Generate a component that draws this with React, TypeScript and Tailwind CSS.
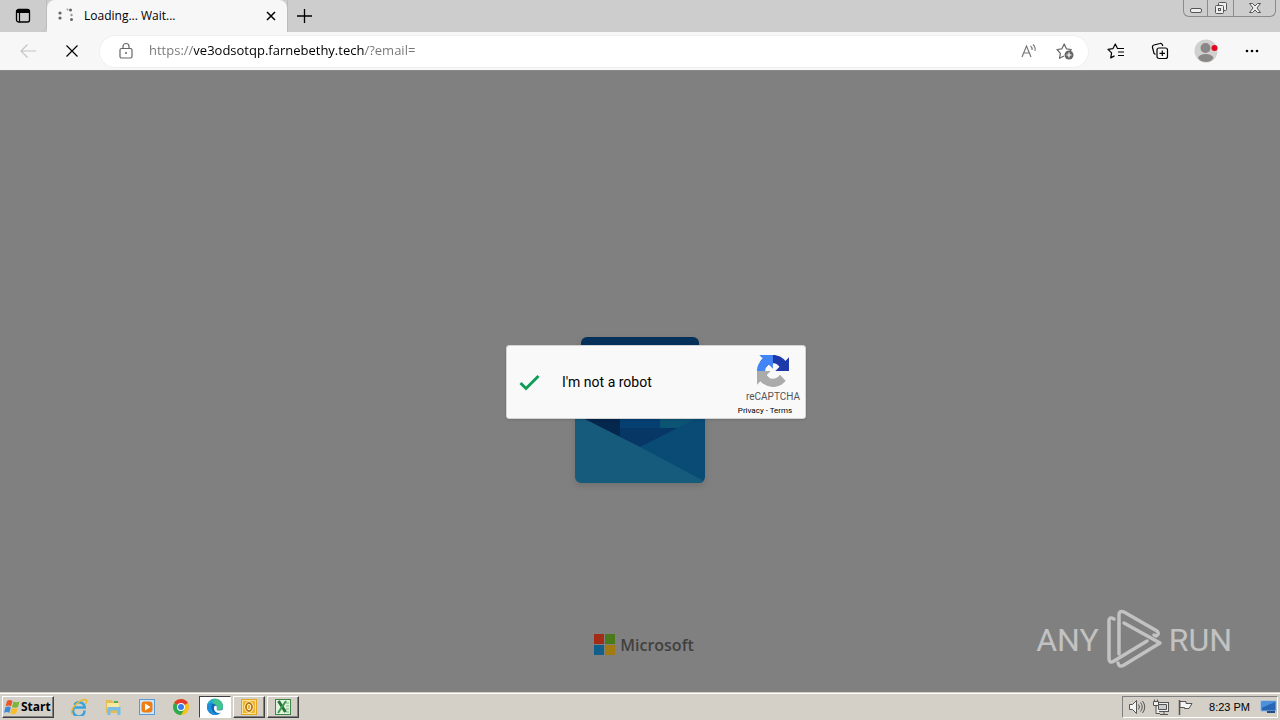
import { useState } from "react";
import type { ReactNode } from "react";

const iconProps = {
  fill: "none",
  stroke: "currentColor",
  "aria-hidden": true,
} as const;

const TabBar = () => (
  <header className="flex h-8 bg-[#cdcdcd]">
    <button
      aria-label="Tab actions"
      className="grid w-[47px] shrink-0 place-content-center rounded-br-md border-r border-[#bcbcbc] text-black"
    >
      <svg width="16" height="16" viewBox="0 0 16 16" {...iconProps}>
        <rect x="1.5" y="1.5" width="13" height="12.5" rx="2" strokeWidth="1.3" />
        <path d="M1.5 2.5h13v2h-13z" fill="currentColor" />
        <path d="M4.5 4v10" strokeWidth="1.2" />
      </svg>
    </button>
    <div className="flex w-[240px] items-center rounded-t-lg bg-[#f7f7f7] pr-2 pl-2.5">
      <svg width="18" height="18" viewBox="0 0 18 18" fill="#666" aria-hidden>
        <circle cx="3" cy="6" r="1.6" />
        <circle cx="3" cy="11" r="1.6" />
        <circle cx="10.5" cy="2.5" r="1" fill="#999" />
        <circle cx="13.5" cy="3" r="1.5" />
        <circle cx="14.5" cy="8" r="1.2" fill="#999" />
        <circle cx="14.5" cy="12.5" r="1.5" />
      </svg>
      <span className="ml-[9px] flex-1 truncate text-xs">Loading... Wait...</span>
      <button aria-label="Close tab" className="grid size-4 place-content-center">
        <svg width="10" height="10" viewBox="0 0 10 10" {...iconProps}>
          <path d="M1 1l8 8M9 1L1 9" strokeWidth="1.5" />
        </svg>
      </button>
    </div>
    <button aria-label="New tab" className="grid w-8 place-content-center border-l border-[#bcbcbc]">
      <svg width="16" height="16" viewBox="0 0 16 16" {...iconProps}>
        <path d="M8.5 1v14M1 8h15" strokeWidth="1.3" />
      </svg>
    </button>
    <div className="mr-1 ml-auto flex h-[17px] divide-x divide-[#8b8b8b] rounded-b-md border border-t-0 border-[#8b8b8b] text-[#555]">
      <button aria-label="Minimize" className="grid w-6 place-content-center">
        <svg width="14" height="14" viewBox="0 0 14 14" {...iconProps}>
          <rect x="1.5" y="7.5" width="11" height="4" rx="1.5" fill="#eee" />
        </svg>
      </button>
      <button aria-label="Restore" className="grid w-[26px] place-content-center">
        <svg width="14" height="14" viewBox="0 0 14 14" {...iconProps}>
          <rect x="4.5" y="1.5" width="8" height="8" rx="1" fill="#eee" />
          <rect x="1.5" y="4.5" width="8" height="8" rx="1" fill="#eee" />
          <rect x="4.5" y="7.5" width="2" height="2" />
        </svg>
      </button>
      <button aria-label="Close window" className="grid w-[41px] place-content-center">
        <svg width="14" height="14" viewBox="0 0 14 14" {...iconProps}>
          <path
            d="M1.5 2.5h3L7 5l2.5-2.5h3L9 7l3.5 4.500h-3L7 9l-2.500 2.500h-3L5 7z"
            fill="#eee"
          />
        </svg>
      </button>
    </div>
  </header>
);

const AddressBar = () => {
  const [url, setUrl] = useState("https://ve3odsotqp.farnebethy.tech/?email=");

  return (
    <nav className="flex h-[39px] items-center border-b border-[#8a8a8a] bg-[#f7f7f7] pr-4">
      <button aria-label="Back" disabled className="ml-3 grid size-8 place-content-center text-[#c4c4c4]">
        <svg width="18" height="16" viewBox="0 0 18 16" {...iconProps}>
          <path d="M17 8H2M8.5 1.5L2 8l6.500 6.500" strokeWidth="1.2" />
        </svg>
      </button>
      <button aria-label="Stop loading" className="ml-3 grid size-8 place-content-center">
        <svg width="14" height="14" viewBox="0 0 14 14" {...iconProps}>
          <path d="M1.5 1.5l11 11M12.5 1.5l-11 11" strokeWidth="1.2" />
        </svg>
      </button>
      <div className="ml-3 flex h-[31px] flex-1 items-center rounded-full bg-white pr-[11px] pl-[18px] ring-1 ring-[#f0f0f0]">
        <svg width="16" height="18" viewBox="0 0 16 18" className="text-[#666]" {...iconProps}>
          <rect x="2" y="6.5" width="12" height="9.5" rx="1.5" strokeWidth="1.2" />
          <path d="M5 6.500V4.500a3 3 0 016 0v2" strokeWidth="1.2" />
          <circle cx="8" cy="11" r="1" fill="currentColor" stroke="none" />
        </svg>
        {/* the host part of the address is darker than the rest */}
        <input
          type="text"
          aria-label="Address"
          value={url}
          onChange={(e) => setUrl(e.target.value)}
          className="ml-[15px] min-w-0 flex-1 bg-[linear-gradient(90deg,#757575_45px,#000_45px,#000_216px,#757575_216px)] bg-clip-text text-[13px] text-transparent caret-black outline-none"
        />
        <button aria-label="Read aloud" className="grid size-6 place-content-center text-[#777]">
          <svg width="18" height="18" viewBox="0 0 18 18" {...iconProps}>
            <path d="M2 15L6.500 4l4.500 11M3.500 11h6" strokeWidth="1.2" />
            <path d="M10.500 4a4 4 0 011.500 4M13 2.500a7 7 0 012 6.500" strokeWidth="1.1" />
          </svg>
        </button>
        <button aria-label="Add to favorites" className="ml-3 grid size-6 place-content-center text-[#666]">
          <svg width="18" height="18" viewBox="0 0 18 18" {...iconProps}>
            <path
              d="M8 14l-4.500 2.300.9-5L1 7.500l4.900-.7L8.200 2l2.200 4.800 4.900.7-1.500 1.500"
              strokeWidth="1.2"
              strokeLinejoin="round"
            />
            <circle cx="13" cy="13" r="4.5" fill="currentColor" stroke="none" />
            <path d="M13 10.500v5M10.500 13h5" stroke="#fff" strokeWidth="1.2" />
          </svg>
        </button>
      </div>
      <button aria-label="Favorites" className="ml-4 grid size-6 place-content-center">
        <svg width="18" height="18" viewBox="0 0 18 18" {...iconProps}>
          <path
            d="M10.500 6.500L8.300 2 5.900 6.700 1 7.400l3.600 3.500-.9 5 3.800-2M10 6.500h7M11 10h6M11 13.500h6"
            strokeWidth="1.2"
            strokeLinejoin="round"
          />
        </svg>
      </button>
      <button aria-label="Collections" className="ml-5 grid size-6 place-content-center">
        <svg width="18" height="18" viewBox="0 0 18 18" {...iconProps}>
          <rect x="6" y="6" width="10.5" height="10.5" rx="2" strokeWidth="1.2" />
          <path d="M11.300 8.500v5.500M8.500 11.300H14" strokeWidth="1.2" />
          <path
            d="M4.500 12.500L3 11.500 1.500 5.500A2 2 0 013 3l6-1.500a2 2 0 012.500 1.500l.3 1"
            strokeWidth="1.2"
          />
        </svg>
      </button>
      <button aria-label="Profile" className="ml-[22px] grid size-6 place-content-center">
        <svg width="24" height="24" viewBox="0 0 24 24" aria-hidden>
          <circle cx="12" cy="12" r="11.5" fill="#d2d0ce" />
          <circle cx="11.5" cy="9" r="5" fill="#8a8886" />
          <path d="M4 19c1-3 4-4 7.500-4s7 1 8 4c-2 3-5 4-7.500 4s-6-1-8-4z" fill="#8a8886" />
          <circle cx="20.500" cy="9" r="3" fill="#e00b1c" />
        </svg>
      </button>
      <button aria-label="Settings and more" className="ml-[22px] grid size-6 place-content-center">
        <svg width="14" height="4" viewBox="0 0 14 4" fill="#000" aria-hidden>
          <circle cx="2" cy="2" r="1.3" />
          <circle cx="7" cy="2" r="1.3" />
          <circle cx="12" cy="2" r="1.3" />
        </svg>
      </button>
    </nav>
  );
};

const Envelope = () => (
  <svg width="130" height="146" viewBox="0 0 130 146" className="drop-shadow-md" aria-hidden>
    <rect x="6" y="0" width="118" height="90" rx="6" fill="#05305a" />
    <path d="M8 60h38v60L8 90z" fill="#05264d" />
    <path d="M45 60h40v50H45z" fill="#064073" />
    <path d="M85 60h42v31H85z" fill="#0c5474" />
    <path d="M45 91h65v20H45z" fill="#063765" />
    <path d="M130 77L65 110v36h59a6 6 0 006-6z" fill="#0a4b76" />
    <path d="M0 77l65 33 63 33.500a6 6 0 01-4 2.500H6a6 6 0 01-6-6z" fill="#175b7c" />
  </svg>
);

const Recaptcha = () => {
  const [checked, setChecked] = useState(true);

  return (
    <section className="flex h-[74px] w-[300px] items-center rounded-[3px] border border-[#d3d3d3] bg-[#f9f9f9] pl-2.5 font-[Roboto,sans-serif] shadow-sm">
      <label className="flex flex-1 items-center text-sm text-black">
        <span className="grid">
          <input
            type="checkbox"
            checked={checked}
            onChange={(e) => setChecked(e.target.checked)}
            className="peer col-start-1 row-start-1 size-6 appearance-none"
          />
          <svg
            width="24"
            height="24"
            viewBox="0 0 24 24"
            className="invisible col-start-1 row-start-1 peer-checked:visible"
            {...iconProps}
          >
            <path d="M3.500 13l5.500 5.500L21.500 6" stroke="#0f9d58" strokeWidth="3" />
          </svg>
        </span>
        <span className="ml-[21px]">I'm not a robot</span>
      </label>
      <div className="flex w-16 flex-col items-center pt-2 text-[#555]">
        <svg width="32" height="32" viewBox="0 0 64 64" aria-hidden>
          <path
            d="M64 31.955l-.033-1.370V4.687l-7.160 7.160C50.948 4.674 42.033.093 32.050.093c-10.400 0-19.622 4.960-25.458 12.640l11.736 11.860a15.550 15.550 0 014.754-5.334c2.050-1.600 4.952-2.906 8.968-2.906.485 0 .860.057 1.135.163 4.976.393 9.288 3.140 11.828 7.124l-8.307 8.307L64 31.953"
            fill="#1c3aa9"
          />
          <path
            d="M31.862.094l-1.370.033H4.594l7.160 7.160C4.580 13.147 0 22.060 0 32.046c0 10.400 4.960 19.622 12.640 25.458L24.500 45.768a15.550 15.550 0 01-5.334-4.754c-1.600-2.050-2.906-4.952-2.906-8.968 0-.485.057-.860.163-1.135.393-4.976 3.140-9.288 7.124-11.828l8.307 8.307L31.860.095"
            fill="#4285f4"
          />
          <path
            d="M.001 32.045l.033 1.370v25.898l7.160-7.160c5.860 7.173 14.774 11.754 24.760 11.754 10.400 0 19.622-4.960 25.458-12.640l-11.736-11.860a15.550 15.550 0 01-4.754 5.334c-2.050 1.600-4.952 2.906-8.968 2.906-.485 0-.860-.057-1.135-.163-4.976-.393-9.288-3.140-11.828-7.124l8.307-8.307c-10.522.040-22.400.066-27.295-.005"
            fill="#ababab"
          />
        </svg>
        <span className="mt-1 text-[10px] leading-3">reCAPTCHA</span>
        <span className="mt-0.5 mr-4 text-[8px] leading-3 whitespace-nowrap text-black">
          <a href="#privacy">Privacy</a> - <a href="#terms">Terms</a>
        </span>
      </div>
    </section>
  );
};

const Watermark = () => (
  <div className="absolute right-12 bottom-5 flex items-center gap-1.5 font-['Liberation_Sans_Narrow','Roboto',sans-serif] text-[32px] leading-none text-[#c2c2c2]">
    <span>ANY</span>
    <svg
      width="58"
      height="64"
      viewBox="0 0 58 64"
      strokeWidth="3.5"
      strokeLinecap="round"
      strokeLinejoin="round"
      {...iconProps}
    >
      <path d="M9 11q-5-3-5 2v37q0 6 5 3l33-20" />
      <path d="M14 46V7q0-5 5-3l33 19q3 3-1 5l-2-1" />
      <path d="M19 15l36 20-36 22q-5 3-6-2" />
    </svg>
    <span>RUN</span>
  </div>
);

const Page = () => (
  <main className="relative flex flex-1 flex-col items-center bg-[#808080]">
    <div className="flex flex-1 flex-col justify-center pt-[114px]">
      <Envelope />
    </div>
    <div className="mb-[37px] ml-2 flex items-center gap-[5px] text-[#404040]">
      <div className="grid size-[21px] grid-cols-2 gap-px">
        <i className="bg-[#a32c17]" />
        <i className="bg-[#4a7a1c]" />
        <i className="bg-[#135f8c]" />
        <i className="bg-[#a17a10]" />
      </div>
      <span className="text-base leading-5 font-semibold">Microsoft</span>
    </div>
    <div className="absolute inset-0 grid place-items-center pl-8">
      <Recaptcha />
    </div>
    <Watermark />
  </main>
);

const ieIcon = (
  <svg width="18" height="18" viewBox="0 0 18 18" fill="none" aria-hidden>
    <path
      d="M14.500 12.500A5.700 5.700 0 114.200 9.500h10.500A5.500 5.500 0 004.500 7"
      stroke="#38a3df"
      strokeWidth="2.5"
    />
    <path d="M2.500 16C-1 13 8 2 15 1.500c3 0 1.500 3 .5 4.500" stroke="#e8b92f" strokeWidth="1.4" />
  </svg>
);

const explorerIcon = (
  <svg width="18" height="18" viewBox="0 0 18 18" aria-hidden>
    <path d="M2 2h6l1 2h6v11H2z" fill="#e5bd55" />
    <path d="M3 5h12v6H3z" fill="#f8e7a0" />
    <path d="M10 3h4v2h-4z" fill="#58aa57" />
    <path d="M3.500 9h13v8h-3v-4.500h-7V17h-3z" fill="#7cbde3" />
  </svg>
);

const mediaIcon = (
  <svg width="18" height="18" viewBox="0 0 18 18" aria-hidden>
    <rect x="1.5" y="1.5" width="15" height="15" fill="#cde6fa" stroke="#5a9bd5" />
    <rect x="3.5" y="3.5" width="11" height="11" rx="3" fill="#ef7d13" />
    <path d="M7 5.500l5.500 3.500L7 12.500z" fill="#fff" />
  </svg>
);

const chromeIcon = (
  <svg width="18" height="18" viewBox="0 0 18 18" aria-hidden>
    <circle cx="9" cy="9" r="8" fill="#fbc116" />
    <path d="M9 9L2.100 5a8 8 0 0113.800 0z" fill="#e33b2e" />
    <path d="M9 9L2.100 5A8 8 0 009 17l3.500-6z" fill="#2da94f" />
    <circle cx="9" cy="9" r="4" fill="#fff" />
    <circle cx="9" cy="9" r="3" fill="#3a7de8" />
  </svg>
);

const edgeIcon = (
  <svg width="18" height="18" viewBox="0 0 18 18" aria-hidden>
    <circle cx="9" cy="9" r="8" fill="#1565b8" />
    <path
      d="M1 9a8 8 0 0116-1c.3 3-2 4.500-4.500 4.300-2-.1-2.200-1-1.600-2C11.500 7 8 5 5 6 2.500 6.800 1 8 1 9z"
      fill="#43c38e"
    />
    <path d="M1 9a8 8 0 019-8C6 2 8 6 5 6 2.500 6.800 1 8 1 9z" fill="#2aaed4" />
    <path d="M1 9c0-3 3-5 6.500-4.500C5 6 5 9 6 12c1 3 4 4 8 3-4 4-13 1-13-6z" fill="#1a8fdc" />
    <path
      d="M8.500 8c1.500-.5 2.800.5 2.300 2-.6 1.800.7 2.700 2.500 2.600 1.500 0 2.800-.4 4.200-1.100L17 14.200c-1.500.6-3 .9-4.500.8-3.500-.2-5.500-4-4-7z"
      fill="#fff"
    />
  </svg>
);

const outlookIcon = (
  <svg width="18" height="18" viewBox="0 0 18 18" fill="none" aria-hidden>
    <rect x="1.5" y="1.5" width="15" height="15" fill="#fbe28c" stroke="#e1a522" />
    <rect x="3" y="3" width="12" height="12" fill="#f0b430" />
    <ellipse cx="9" cy="9" rx="3" ry="4" stroke="#fff8df" strokeWidth="3.4" />
    <ellipse cx="9" cy="9" rx="3" ry="4" stroke="#b87608" strokeWidth="1.8" />
  </svg>
);

const excelIcon = (
  <svg width="18" height="18" viewBox="0 0 18 18" fill="none" aria-hidden>
    <rect x="1.5" y="1.5" width="15" height="15" fill="#e4f2e2" stroke="#3a8744" />
    <path d="M12 5h3M12 8h3M12 11h3M12 14h3" stroke="#79b07e" />
    <path d="M4.500 3l7 11" stroke="#25733a" strokeWidth="3" />
    <path d="M12 3L4 15" stroke="#3c9a4a" strokeWidth="2" />
  </svg>
);

interface Task {
  name: string;
  icon: ReactNode;
  state: "pinned" | "active" | "open";
}

const tasks: Task[] = [
  { name: "Internet Explorer", icon: ieIcon, state: "pinned" },
  { name: "Windows Explorer", icon: explorerIcon, state: "pinned" },
  { name: "Media Player", icon: mediaIcon, state: "pinned" },
  { name: "Chrome", icon: chromeIcon, state: "pinned" },
  { name: "Edge", icon: edgeIcon, state: "active" },
  { name: "Outlook", icon: outlookIcon, state: "open" },
  { name: "Excel", icon: excelIcon, state: "open" },
];

const taskStyles = {
  pinned: "border-transparent",
  active: "border-t-[#404040] border-l-[#404040] border-r-white border-b-white bg-white",
  open: "border-t-white border-l-white border-r-[#404040] border-b-[#404040] shadow-[inset_-1px_-1px_#808080]",
};

const Taskbar = () => (
  <footer className="flex h-7 items-center bg-[#d4d0c8] px-0.5 pt-0.5 shadow-[inset_0_1px_#d4d0c8,inset_0_2px_#fff]">
    <button className="flex h-[22px] w-[52px] items-center gap-px border border-t-white border-r-[#404040] border-b-[#404040] border-l-white pl-px font-['Open_Sans',sans-serif] text-xs font-bold text-black shadow-[inset_-1px_-1px_#808080]">
      <svg width="16" height="16" viewBox="0 0 16 16" className="shrink-0" aria-hidden>
        <path d="M3 2q3-2 5.500 0L7 7.500q-2.500-2-5.500 0z" fill="#e8562a" />
        <path d="M9.500 2.500q3 1.500 6 0L14 8q-3 1.500-6 0z" fill="#7ab63c" />
        <path d="M1.300 8.500q3-2 5.500 0L5.300 14q-2.500-2-5.300 0z" fill="#3b8bd6" />
        <path d="M7.700 9q3 1.500 6 0l-1.500 5.500q-3 1.500-6 0z" fill="#f6be2c" />
      </svg>
      Start
    </button>
    <div className="ml-[9px] flex gap-0.5">
      {tasks.map((task) => (
        <button
          key={task.name}
          aria-label={task.name}
          className={`grid h-[22px] w-8 place-content-center border ${taskStyles[task.state]}`}
        >
          {task.icon}
        </button>
      ))}
    </div>
    <div className="ml-auto flex h-[22px] items-center border border-t-[#808080] border-r-white border-b-white border-l-[#808080] pl-[5px] text-[#555]">
      <svg width="18" height="18" viewBox="0 0 18 18" {...iconProps}>
        <path d="M1.500 6.500h3l4-4v13l-4-4h-3z" fill="#f4f4f4" />
        <path d="M10.500 6.500q2 2.500 0 5M12.500 4.500q3.500 4.500 0 9M14.500 3q4.500 6 0 12" />
      </svg>
      <svg width="18" height="18" viewBox="0 0 18 18" className="ml-1.5" {...iconProps}>
        <rect x="4.5" y="4.5" width="12" height="9" fill="#eee" />
        <path d="M6.500 6.500h8v5h-8z" fill="#ccc" />
        <path d="M8 16.500h8M12 13.500v3" />
        <path d="M1.500 3.500h5v4h-5zM2.500 1.500v2M5.500 1.500v2M4 7.500v8h4" fill="#eee" />
      </svg>
      <svg width="18" height="18" viewBox="0 0 18 18" className="ml-1.5" {...iconProps}>
        <path d="M3.500 2v15" strokeWidth="1.5" />
        <path d="M4 3.500h6v2h6l-3 5H8.500v-1H4z" fill="#f4f4f4" />
      </svg>
      <time className="ml-[15px] font-['Liberation_Sans',sans-serif] text-[11px] text-black">8:23 PM</time>
      <button aria-label="Show desktop" className="ml-2.5 grid h-5 w-[17px] place-content-center">
        <svg width="17" height="16" viewBox="0 0 17 16" aria-hidden>
          <rect x="1" y="2" width="15" height="10" fill="#2666b5" stroke="#8fb8e6" />
          <path d="M1.500 9L15 3v-.5H1.500z" fill="#4d90dc" />
          <path d="M7 12h8v2H7z" fill="#234c80" />
        </svg>
      </button>
    </div>
  </footer>
);

export default function App() {
  return (
    <div className="flex min-h-screen flex-col font-['Open_Sans','Noto_Sans',sans-serif] text-black">
      <TabBar />
      <AddressBar />
      <Page />
      <Taskbar />
    </div>
  );
}
